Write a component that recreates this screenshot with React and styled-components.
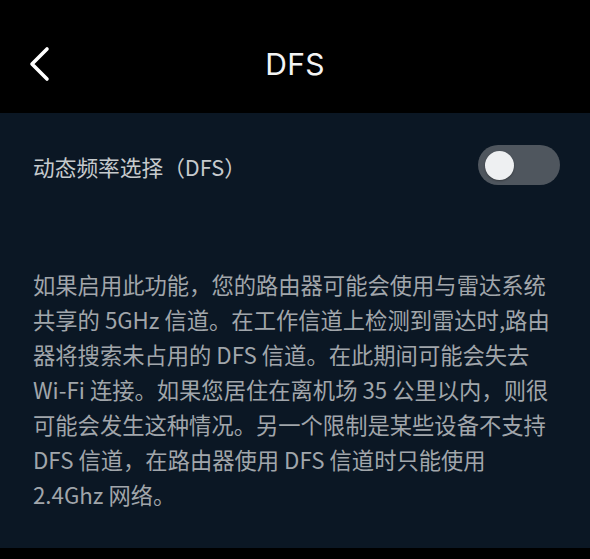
import styled, { createGlobalStyle } from "styled-components";

const GlobalStyle = createGlobalStyle`
   html, body {
      margin: 0;
      padding: 0;
      background: #000000;
   }
   body {
      font-family: Inter, "Noto Sans CJK SC", sans-serif;
   }
`;

const Page = styled.div`
   width: 590px;
   height: 559px;
   background: #000000;
   display: flex;
   flex-direction: column;
`;

const Header = styled.div`
   height: 113px;
   display: flex;
   align-items: center;
   justify-content: center;
   position: relative;
   flex-shrink: 0;
`;

const BackButton = styled.button`
   position: absolute;
   left: 24px;
   top: 40px;
   width: 36px;
   height: 48px;
   padding: 0;
   border: none;
   background: none;
   display: flex;
   align-items: center;
   justify-content: center;
   cursor: pointer;
`;

const Title = styled.div`
   color: #f4f4f4;
   font-family: Inter, "Noto Sans CJK SC", sans-serif;
   font-size: 30px;
   font-weight: 400;
   margin-top: 14px;
   letter-spacing: 0.3px;
`;

const Body = styled.div`
   height: 435px;
   background: #0b1724;
   padding: 32px 30px 0 33px;
   box-sizing: border-box;
   display: flex;
   flex-direction: column;
`;

const SettingRow = styled.div`
   display: flex;
   align-items: center;
   justify-content: space-between;
   height: 40px;
`;

const SettingLabel = styled.div`
   color: #c6cacd;
   font-family: "Noto Sans CJK SC", sans-serif;
   font-size: 21.7px;
   margin-top: 3px;
`;

const Track = styled.div`
   width: 82px;
   height: 40px;
   border-radius: 20px;
   background: ${(p) => (p.$on ? "#2f7cf6" : "#4f565e")};
   display: flex;
   align-items: center;
   justify-content: ${(p) => (p.$on ? "flex-end" : "flex-start")};
   padding: 0 7px;
   box-sizing: border-box;
`;

const Knob = styled.div`
   width: 29px;
   height: 29px;
   border-radius: 50%;
   background: #eef0f2;
   box-shadow: 0 1px 2px rgba(0, 0, 0, 0.35);
`;

const Description = styled.p`
   margin: 82px 0 0 0;
   color: #a1a6ab;
   font-family: "Noto Sans CJK SC", sans-serif;
   font-size: 22.3px;
   line-height: 35px;
   white-space: nowrap;
`;

const lines = [
   "如果启用此功能，您的路由器可能会使用与雷达系统",
   "共享的 5GHz 信道。在工作信道上检测到雷达时,路由",
   "器将搜索未占用的 DFS 信道。在此期间可能会失去",
   "Wi-Fi 连接。如果您居住在离机场 35 公里以内，则很",
   "可能会发生这种情况。另一个限制是某些设备不支持",
   "DFS 信道，在路由器使用 DFS 信道时只能使用",
   "2.4Ghz 网络。",
];

const App = () => {
   return (
      <Page>
         <GlobalStyle />
         <Header>
            <BackButton>
               <svg width="30" height="40" viewBox="0 0 30 40">
                  <polyline
                     points="20,5 5,20 20,35"
                     fill="none"
                     stroke="#ffffff"
                     strokeWidth="3.6"
                     strokeLinecap="round"
                     strokeLinejoin="round"
                  />
               </svg>
            </BackButton>
            <Title>DFS</Title>
         </Header>
         <Body>
            <SettingRow>
               <SettingLabel>动态频率选择（DFS）</SettingLabel>
               <Track $on={false}>
                  <Knob />
               </Track>
            </SettingRow>
            <Description>
               {lines.map((l, i) => (
                  <span key={i}>
                     {l}
                     <br />
                  </span>
               ))}
            </Description>
         </Body>
      </Page>
   );
};

export default App;
